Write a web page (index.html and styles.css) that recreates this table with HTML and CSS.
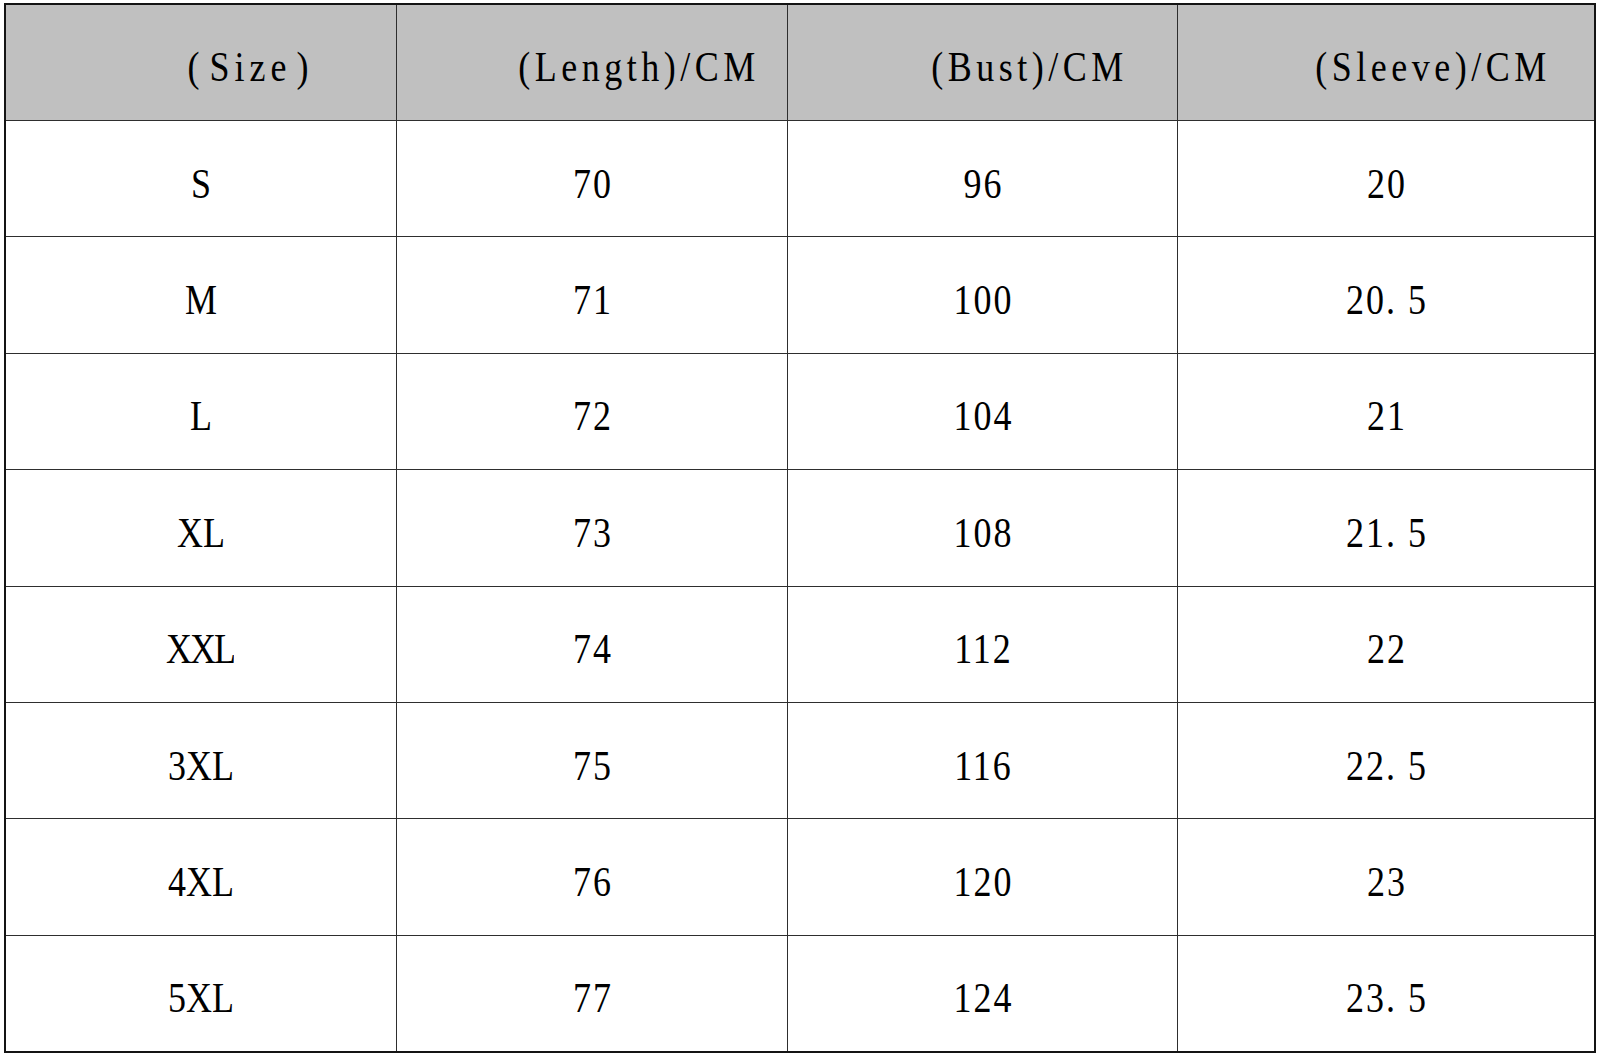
FILE: index.html
```html
<!DOCTYPE html>
<html>
<head>
<meta charset="utf-8">
<link rel="stylesheet" href="styles.css">
</head>
<body>
<div class="sheet">
  <div class="table">
    <div class="cell head"><span class="t size"><span class="par">(</span>Size<span class="par">)</span></span></div>
    <div class="cell head"><span class="t">(Length)/CM</span></div>
    <div class="cell head"><span class="t">(Bust)/CM</span></div>
    <div class="cell head"><span class="t">(Sleeve)/CM</span></div>

    <div class="cell"><span class="t">S</span></div>
    <div class="cell"><span class="t num">70</span></div>
    <div class="cell"><span class="t num">96</span></div>
    <div class="cell"><span class="t num">20</span></div>

    <div class="cell"><span class="t">M</span></div>
    <div class="cell"><span class="t num">71</span></div>
    <div class="cell"><span class="t num">100</span></div>
    <div class="cell"><span class="t num">20. 5</span></div>

    <div class="cell"><span class="t">L</span></div>
    <div class="cell"><span class="t num">72</span></div>
    <div class="cell"><span class="t num">104</span></div>
    <div class="cell"><span class="t num">21</span></div>

    <div class="cell"><span class="t">XL</span></div>
    <div class="cell"><span class="t num">73</span></div>
    <div class="cell"><span class="t num">108</span></div>
    <div class="cell"><span class="t num">21. 5</span></div>

    <div class="cell"><span class="t tight">XXL</span></div>
    <div class="cell"><span class="t num">74</span></div>
    <div class="cell"><span class="t num">112</span></div>
    <div class="cell"><span class="t num">22</span></div>

    <div class="cell"><span class="t">3XL</span></div>
    <div class="cell"><span class="t num">75</span></div>
    <div class="cell"><span class="t num">116</span></div>
    <div class="cell"><span class="t num">22. 5</span></div>

    <div class="cell"><span class="t">4XL</span></div>
    <div class="cell"><span class="t num">76</span></div>
    <div class="cell"><span class="t num">120</span></div>
    <div class="cell"><span class="t num">23</span></div>

    <div class="cell"><span class="t">5XL</span></div>
    <div class="cell"><span class="t num">77</span></div>
    <div class="cell"><span class="t num">124</span></div>
    <div class="cell"><span class="t num">23. 5</span></div>
  </div>
</div>
</body>
</html>
```

FILE: styles.css
```css
html, body {
  margin: 0;
  padding: 0;
  background: #ffffff;
}

.sheet {
  padding: 3px 0 0 4px;
}

.table {
  display: grid;
  grid-template-columns: 390px 390px 389px 416px;
  grid-template-rows: 115px repeat(8, 1fr);
  gap: 1px;
  width: 1588px;
  height: 1046px;
  border: 2px solid #141414;
  background: #2e2e2e;
  font-family: "Liberation Serif", serif;
  font-size: 36px;
  color: #000;
}

.cell {
  background: #ffffff;
  display: flex;
  align-items: center;
  justify-content: center;
  padding-top: 10px;
  box-sizing: border-box;
}

.cell.head {
  background: #c0c0c0;
  padding-left: 94px;
  padding-top: 8px;
}

.t {
  display: inline-block;
  transform: scaleY(1.2);
  line-height: 1;
  white-space: pre;
}

.head .t {
  letter-spacing: 4.5px;
}

.head .t.size {
  letter-spacing: 5px;
  margin-right: -5px;
}

.par {
  display: inline-block;
  margin: 0 5px;
}

.num {
  letter-spacing: 2px;
  margin-right: -2px;
}

.tight {
  letter-spacing: -2px;
  margin-right: 2px;
}
```
